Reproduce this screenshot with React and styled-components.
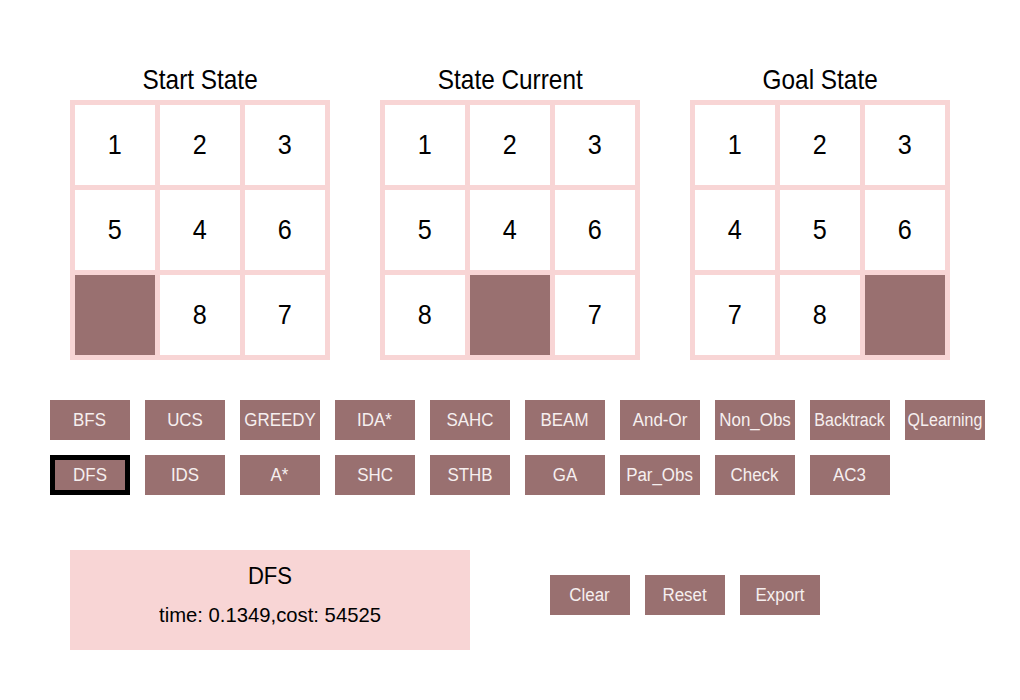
import React from "react";
import styled, { createGlobalStyle } from "styled-components";

const Global = createGlobalStyle`
  html, body { margin: 0; padding: 0; background: #ffffff; }
  body { font-family: "Liberation Sans", Arial, sans-serif; }
`;

const PINK = "#f8d5d5";
const MAUVE = "#997070";

const Page = styled.div`
  width: 1020px;
  height: 700px;
  box-sizing: border-box;
  padding-top: 64px;
  display: flex;
  flex-direction: column;
`;

const Boards = styled.div`
  display: flex;
  gap: 50px;
  padding-left: 70px;
`;

const BoardColumn = styled.div`
  display: flex;
  flex-direction: column;
  width: 260px;
`;

const BoardTitle = styled.div`
  height: 32px;
  margin-bottom: 4px;
  display: flex;
  justify-content: center;
`;

const Narrow = styled.span`
  display: inline-block;
  font-size: ${(p) => p.$size}px;
  line-height: ${(p) => p.$lh || 32}px;
  transform: scaleX(${(p) => p.$squeeze});
  transform-origin: center;
  white-space: nowrap;
`;

const Board = styled.div`
  box-sizing: border-box;
  width: 260px;
  height: 260px;
  padding: 5px;
  background: ${PINK};
  display: grid;
  grid-template-columns: repeat(3, 80px);
  grid-template-rows: repeat(3, 80px);
  gap: 5px;
  color: #000;
`;

const Tile = styled.div`
  background: ${(p) => (p.$blank ? MAUVE : "#ffffff")};
  display: flex;
  align-items: center;
  justify-content: center;
`;

const Algorithms = styled.div`
  margin-top: 40px;
  padding-left: 50px;
  display: grid;
  grid-template-columns: repeat(10, 80px);
  grid-auto-rows: 40px;
  column-gap: 15px;
  row-gap: 15px;
`;

const ActionButton = styled.div`
  box-sizing: border-box;
  width: 80px;
  height: 40px;
  background: ${MAUVE};
  color: #f6efef;
  display: flex;
  align-items: center;
  justify-content: center;
  overflow: hidden;
  white-space: nowrap;
  border: ${(p) => (p.$selected ? "5px solid #000" : "none")};
`;

const Bottom = styled.div`
  margin-top: 55px;
  padding-left: 70px;
  display: flex;
  gap: 80px;
`;

const Result = styled.div`
  box-sizing: border-box;
  width: 400px;
  height: 100px;
  background: ${PINK};
  padding-top: 12px;
  display: flex;
  flex-direction: column;
  align-items: center;
  gap: 12px;
  color: #000;
`;

const Controls = styled.div`
  margin-top: 25px;
  display: flex;
  gap: 15px;
  align-self: flex-start;
`;

const boards = [
  { title: "Start State", tiles: [1, 2, 3, 5, 4, 6, 0, 8, 7] },
  { title: "State Current", tiles: [1, 2, 3, 5, 4, 6, 8, 0, 7] },
  { title: "Goal State", tiles: [1, 2, 3, 4, 5, 6, 7, 8, 0] },
];

const algos = [
  "BFS", "UCS", "GREEDY", "IDA*", "SAHC", "BEAM", "And-Or", "Non_Obs", "Backtrack", "QLearning",
  "DFS", "IDS", "A*", "SHC", "STHB", "GA", "Par_Obs", "Check", "AC3",
];

const tight = new Set(["Backtrack", "QLearning"]);

function Label({ children, squeeze = 0.94 }) {
  return (
    <Narrow $size={18} $lh={22} $squeeze={squeeze}>
      {children}
    </Narrow>
  );
}

export default function App() {
  return (
    <>
      <Global />
      <Page>
        <Boards>
          {boards.map((b) => (
            <BoardColumn key={b.title}>
              <BoardTitle>
                <Narrow $size={28} $squeeze={0.87}>{b.title}</Narrow>
              </BoardTitle>
              <Board>
                {b.tiles.map((t, i) => (
                  <Tile key={i} $blank={t === 0}>
                    {t !== 0 && (
                      <Narrow $size={28} $squeeze={0.9}>{t}</Narrow>
                    )}
                  </Tile>
                ))}
              </Board>
            </BoardColumn>
          ))}
        </Boards>
        <Algorithms>
          {algos.map((a) => (
            <ActionButton key={a} $selected={a === "DFS"}>
              <Label squeeze={tight.has(a) ? 0.89 : 0.94}>{a}</Label>
            </ActionButton>
          ))}
        </Algorithms>
        <Bottom>
          <Result>
            <Narrow $size={23} $lh={28} $squeeze={0.96}>DFS</Narrow>
            <Narrow $size={21} $lh={26} $squeeze={0.965}>time: 0.1349,cost: 54525</Narrow>
          </Result>
          <Controls>
            <ActionButton><Label>Clear</Label></ActionButton>
            <ActionButton><Label>Reset</Label></ActionButton>
            <ActionButton><Label>Export</Label></ActionButton>
          </Controls>
        </Bottom>
      </Page>
    </>
  );
}
